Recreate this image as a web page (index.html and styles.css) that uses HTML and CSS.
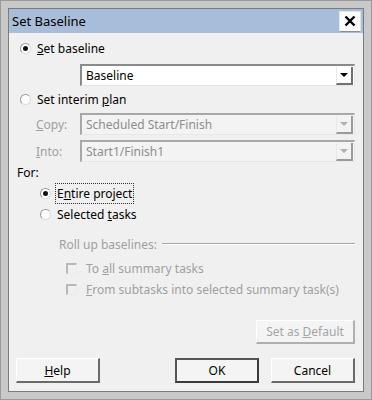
FILE: index.html
```html
<!DOCTYPE html>
<html lang="en">
<head>
  <meta charset="UTF-8">
  <title>Set Baseline</title>
  <link rel="stylesheet" href="styles.css">
</head>
<body>
  <div class="frame">
    <div class="dialog">
      <div class="titlebar">
        <span class="title">Set Baseline</span>
        <a class="close">
          <svg width="12" height="12" viewBox="0 0 12 12"><path d="M1.5 1.5 L10.5 10.5 M10.5 1.5 L1.5 10.5" stroke="#000" stroke-width="2.4"/></svg>
        </a>
      </div>
      <div class="content">
        <div class="row top">
          <span class="radio checked"></span>
          <span class="label"><u>S</u>et baseline</span>
        </div>
        <div class="field base">
          <div class="combo"><span class="val">Baseline</span><span class="arrow"></span></div>
        </div>
        <div class="row interim">
          <span class="radio"></span>
          <span class="label">Set interim <u>p</u>lan</span>
        </div>
        <div class="field copy dim">
          <span class="cap"><u>C</u>opy:</span>
          <div class="combo off"><span class="val">Scheduled Start/Finish</span><span class="arrow"></span></div>
        </div>
        <div class="field into dim">
          <span class="cap"><u>I</u>nto:</span>
          <div class="combo off"><span class="val">Start1/Finish1</span><span class="arrow"></span></div>
        </div>
        <div class="for">For:</div>
        <div class="row sub">
          <span class="radio checked"></span>
          <span class="label focus">E<u>n</u>tire project</span>
        </div>
        <div class="row sub second">
          <span class="radio"></span>
          <span class="label">Selected <u>t</u>asks</span>
        </div>
        <div class="group">
          <span class="gtitle">Roll up baselines:</span>
          <span class="gline"></span>
        </div>
        <div class="check">
          <span class="box"></span>
          <span class="label">To <u>a</u>ll summary tasks</span>
        </div>
        <div class="check second">
          <span class="box"></span>
          <span class="label"><u>F</u>rom subtasks into selected summary task(s)</span>
        </div>
        <div class="defrow">
          <a class="btn disabled"><span>Set as <u>D</u>efault</span></a>
        </div>
        <div class="buttons">
          <a class="btn"><span><u>H</u>elp</span></a>
          <span class="spacer"></span>
          <a class="btn default"><span>OK</span></a>
          <a class="btn"><span>Cancel</span></a>
        </div>
      </div>
    </div>
  </div>
</body>
</html>
```

FILE: styles.css
```css
html, body {
  margin: 0;
  padding: 0;
}
body {
  width: 372px;
  height: 400px;
  background: #c2c2c2;
  font-family: "Noto Sans", "Open Sans", sans-serif;
  font-size: 12px;
  color: #000;
}
.frame {
  box-sizing: border-box;
  width: 372px;
  height: 400px;
  padding: 7px;
  background: #c9c9c9;
  border: 1px solid #9a9a9a;
}
.dialog {
  box-sizing: border-box;
  height: 100%;
  border: 1px solid #7c7c7c;
  background: #f0f0f0;
  display: flex;
  flex-direction: column;
}
.titlebar {
  height: 24px;
  background: #a8bdd9;
  display: flex;
  align-items: center;
  justify-content: space-between;
  padding: 0 2px 0 3px;
}
.title {
  font-size: 13px;
}
.close {
  width: 20px;
  height: 19px;
  background: #fcfcfc;
  border: 1px solid #e6e6e6;
  border-bottom-color: #8f8f8f;
  display: flex;
  align-items: center;
  justify-content: center;
}
.content {
  padding: 4px 8px 0 7px;
  display: flex;
  flex-direction: column;
}

/* radio rows */
.row {
  display: flex;
  align-items: center;
  height: 22px;
  padding-left: 4px;
}
.row.interim {
  margin-top: 2px;
}
.row.sub {
  padding-left: 24px;
}
.row.second {
  margin-top: -1px;
}
.radio {
  box-sizing: border-box;
  width: 11px;
  height: 11px;
  border-radius: 50%;
  border: 1px solid #dcdcdc;
  border-top-color: #9a9a9a;
  border-left-color: #9a9a9a;
  background: #fff;
  margin-right: 6px;
  position: relative;
}
.radio.checked::after {
  content: "";
  position: absolute;
  left: 2px;
  top: 2px;
  width: 5px;
  height: 5px;
  border-radius: 50%;
  background: #111;
}
.label u, .btn u {
  text-decoration-thickness: 1px;
}
.focus {
  outline: 1px dotted #333;
  outline-offset: 1px;
}

/* combos */
.field {
  display: flex;
  align-items: center;
  height: 22px;
  padding-left: 20px;
}
.field.base {
  margin-top: 5px;
  padding-left: 64px;
}
.field.copy {
  margin-top: 3px;
}
.field.into {
  margin-top: 5px;
}
.cap {
  width: 44px;
  color: #a0a0a0;
}
.combo {
  box-sizing: border-box;
  flex: 1;
  height: 22px;
  background: #fff;
  border: 1px solid #e8e8e8;
  border-top: 2px solid #8a8a8a;
  border-left: 2px solid #8a8a8a;
  display: flex;
  align-items: center;
  justify-content: space-between;
}
.combo .val {
  padding-left: 4px;
}
.combo .arrow {
  box-sizing: border-box;
  width: 17px;
  height: 18px;
  border-right: 2px solid #6f6f6f;
  border-bottom: 2px solid #6f6f6f;
  border-left: 1px solid #e8e8e8;
  margin-right: 1px;
  position: relative;
}
.combo .arrow::after {
  content: "";
  position: absolute;
  left: 3px;
  top: 6px;
  border: 4px solid transparent;
  border-top: 4px solid #000;
  border-bottom: 0;
}
.combo.off {
  background: #f3f3f3;
  color: #8d8d8d;
  border-top-color: #a8a8a8;
  border-left-color: #a8a8a8;
}
.combo.off .arrow {
  border-right-color: #9a9a9a;
  border-bottom-color: #9a9a9a;
}
.combo.off .arrow::after {
  border-top-color: #b0b0b0;
}
.for {
  margin-top: 2px;
  padding-left: 1px;
  height: 18px;
  line-height: 18px;
}

/* roll up group */
.group {
  display: flex;
  align-items: center;
  margin-top: 9px;
  padding-left: 43px;
  height: 20px;
  color: #a0a0a0;
}
.gtitle {
  margin-right: 5px;
}
.gline {
  flex: 1;
  height: 0;
  border-top: 1px solid #a8a8a8;
  border-bottom: 1px solid #fff;
}
.check {
  display: flex;
  align-items: center;
  height: 20px;
  padding-left: 50px;
  margin-top: 4px;
  color: #a0a0a0;
}
.check.second {
  margin-top: 1px;
}
.box {
  box-sizing: border-box;
  width: 11px;
  height: 11px;
  border: 1px solid #eaeaea;
  border-top: 2px solid #b8b8b8;
  border-left: 2px solid #b8b8b8;
  margin-right: 9px;
}

/* buttons */
.defrow {
  display: flex;
  justify-content: flex-end;
  margin-top: 21px;
}
.buttons {
  display: flex;
  gap: 12px;
  margin-top: 14px;
}
.spacer {
  flex: 1;
}
.btn {
  box-sizing: border-box;
  width: 84px;
  height: 25px;
  background: #f4f4f4;
  border: 1px solid #ffffff;
  border-right: 2px solid #6a6a6a;
  border-bottom: 2px solid #6a6a6a;
  display: flex;
  align-items: center;
  justify-content: center;
  color: #000;
}
.btn.default {
  border: 2px solid #3a3a3a;
  border-top-color: #555;
  border-left-color: #555;
}
.btn.disabled {
  width: 99px;
  height: 24px;
  color: #a4a4a4;
  border-right-color: #b0b0b0;
  border-bottom-color: #b0b0b0;
}
```
